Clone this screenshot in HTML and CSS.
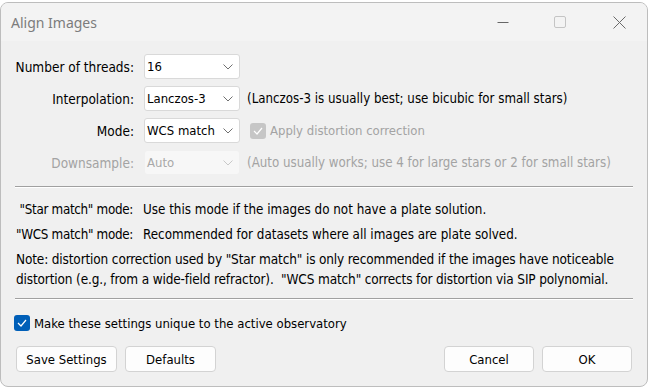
FILE: index.html
```html
<!DOCTYPE html>
<html>
<head>
<meta charset="utf-8">
<link rel="stylesheet" href="styles.css">
</head>
<body>
<div class="window">
  <div class="titlebar">
    <span class="title">Align Images</span>
    <div class="caps">
      <span class="cap cap-min"><svg width="12" height="12" viewBox="0 0 12 12"><path d="M0.5 6.5h11" stroke="#666" stroke-width="1"/></svg></span>
      <span class="cap cap-max"><svg width="12" height="12" viewBox="0 0 12 12"><rect x="0.5" y="0.5" width="11" height="11" rx="1.5" fill="none" stroke="#c4c4c4"/></svg></span>
      <span class="cap cap-close"><svg width="13" height="13" viewBox="0 0 13 13"><path d="M0.5 0.5L12.5 12.5M12.5 0.5L0.5 12.5" stroke="#6a6a6a" stroke-width="1"/></svg></span>
    </div>
  </div>
  <div class="body">
    <div class="form">
      <label class="lbl">Number of threads:</label>
      <div class="combo"><span>16</span><svg class="chev" width="10" height="6" viewBox="0 0 10 6"><path d="M0.5 0.5L5 5L9.5 0.5" fill="none" stroke="#707070"/></svg></div>
      <span></span>

      <label class="lbl">Interpolation:</label>
      <div class="combo"><span>Lanczos-3</span><svg class="chev" width="10" height="6" viewBox="0 0 10 6"><path d="M0.5 0.5L5 5L9.5 0.5" fill="none" stroke="#707070"/></svg></div>
      <span class="help">(Lanczos-3 is usually best; use bicubic for small stars)</span>

      <label class="lbl">Mode:</label>
      <div class="combo"><span>WCS match</span><svg class="chev" width="10" height="6" viewBox="0 0 10 6"><path d="M0.5 0.5L5 5L9.5 0.5" fill="none" stroke="#707070"/></svg></div>
      <span class="check disabled"><span class="box dis"><svg width="10" height="8" viewBox="0 0 10 8"><path d="M1 4L4 7L9 1" fill="none" stroke="#fff" stroke-width="1.2"/></svg></span>Apply distortion correction</span>

      <label class="lbl disabled">Downsample:</label>
      <div class="combo off"><span>Auto</span><svg class="chev" width="10" height="6" viewBox="0 0 10 6"><path d="M0.5 0.5L5 5L9.5 0.5" fill="none" stroke="#c8c8c8"/></svg></div>
      <span class="help disabled">(Auto usually works; use 4 for large stars or 2 for small stars)</span>
    </div>
    <hr class="sep">
    <div class="notes">
      <div class="nrow"><span class="nlbl">&nbsp;"Star match" mode:</span><span>Use this mode if the images do not have a plate solution.</span></div>
      <div class="nrow"><span class="nlbl">"WCS match" mode:</span><span>Recommended for datasets where all images are plate solved.</span></div>
      <p class="note">Note: distortion correction used by "Star match" is only recommended if the images have noticeable distortion (e.g., from a wide-field refractor).&nbsp; "WCS match" corrects for distortion via SIP polynomial.</p>
    </div>
    <hr class="sep sep2">
    <div class="check main"><span class="box on"><svg width="10" height="8" viewBox="0 0 10 8"><path d="M1 4L4 7L9 1" fill="none" stroke="#fff" stroke-width="1.2"/></svg></span>Make these settings unique to the active observatory</div>
    <div class="buttons">
      <button class="btn">Save Settings</button>
      <button class="btn">Defaults</button>
      <span class="spacer"></span>
      <button class="btn">Cancel</button>
      <button class="btn">OK</button>
    </div>
  </div>
</div>
</body>
</html>
```
FILE: styles.css
```css
html, body {
  margin: 0;
  padding: 0;
  background: #ffffff;
}
body {
  width: 650px;
  height: 390px;
  overflow: hidden;
  font-family: "DejaVu Sans Condensed", "DejaVu Sans", sans-serif;
  font-size: 12px;
  color: #000;
}
.window {
  margin-top: 2px;
  width: 648px;
  height: 385px;
  box-sizing: border-box;
  border: 1px solid #bdbdbd;
  border-radius: 8px;
  background: #f0f0f0;
  overflow: hidden;
  display: flex;
  flex-direction: column;
}
.titlebar {
  height: 38px;
  flex: none;
  background: #f3f3f3;
  display: flex;
  align-items: center;
  padding-left: 10px;
}
.title {
  font-family: "Noto Sans", "Open Sans", sans-serif;
  font-size: 14px;
  color: #7c7c7c;
}
.caps {
  margin-left: auto;
  margin-right: 21px;
  display: flex;
  align-items: center;
}
.cap {
  display: flex;
  align-items: center;
  justify-content: center;
}
.cap-max { margin-left: 45px; }
.cap-close { margin-left: 47px; }
.body {
  flex: 1;
  padding: 13px 14px 0 14px;
  display: flex;
  flex-direction: column;
}
.form {
  display: grid;
  grid-template-columns: 119px 96px 1fr;
  column-gap: 10px;
  row-gap: 7px;
  align-items: center;
}
.lbl {
  text-align: right;
  font-size: 13.5px;
  white-space: nowrap;
}
.combo {
  height: 25px;
  box-sizing: border-box;
  background: #fff;
  border: 1px solid #d9d9d9;
  border-radius: 3px;
  display: flex;
  align-items: center;
  padding: 0 6px 0 2px;
  font-size: 13px;
  white-space: nowrap;
}
.combo .chev { margin-left: auto; flex: none; }
.combo.off {
  background: #f7f7f7;
  border-color: #f0f0f0;
  color: #a8a8a8;
}
.help {
  font-size: 13.2px;
  margin-left: -3px;
  white-space: nowrap;
}
.disabled { color: #a3a3a3; }
.check {
  display: flex;
  align-items: center;
  font-size: 13px;
  white-space: nowrap;
}
.box {
  width: 16px;
  height: 16px;
  box-sizing: border-box;
  border-radius: 3px;
  display: inline-flex;
  align-items: center;
  justify-content: center;
  margin-right: 4px;
}
.box.dis { background: #c6c6c6; }
.box.on { background: #005fb8; }
.sep {
  border: none;
  border-top: 1px solid #a0a0a0;
  border-bottom: 1px solid #fff;
  margin: 11px 0 0 0;
  height: 0;
}
.sep2 { margin-top: 9px; }
.notes {
  padding: 9px 0 0 1px;
  font-size: 13.5px;
}
.nrow {
  display: flex;
  height: 25px;
  line-height: 25px;
  font-size: 13.3px;
}
.nlbl {
  width: 127px;
  white-space: nowrap;
  flex: none;
  letter-spacing: -0.3px;
}
.note {
  margin: 0;
  line-height: 20px;
  padding-top: 2px;
  letter-spacing: -0.15px;
}
.main {
  margin-top: 15px;
  margin-left: -1px;
}
.buttons {
  display: flex;
  margin-top: 15px;
  margin-left: 1px;
  margin-right: 1px;
}
.btn {
  height: 26px;
  box-sizing: border-box;
  background: #fdfdfd;
  border: 1px solid #d3d3d3;
  border-radius: 4px;
  font-family: inherit;
  font-size: 13px;
  color: #000;
  padding: 0;
  margin-right: 8px;
}
.btn:nth-child(1) { width: 101px; }
.btn:nth-child(2) { width: 91px; }
.btn:nth-child(4) { width: 90px; }
.btn:nth-child(5) { width: 90px; margin-right: 0; }
.spacer { flex: 1; }
```
